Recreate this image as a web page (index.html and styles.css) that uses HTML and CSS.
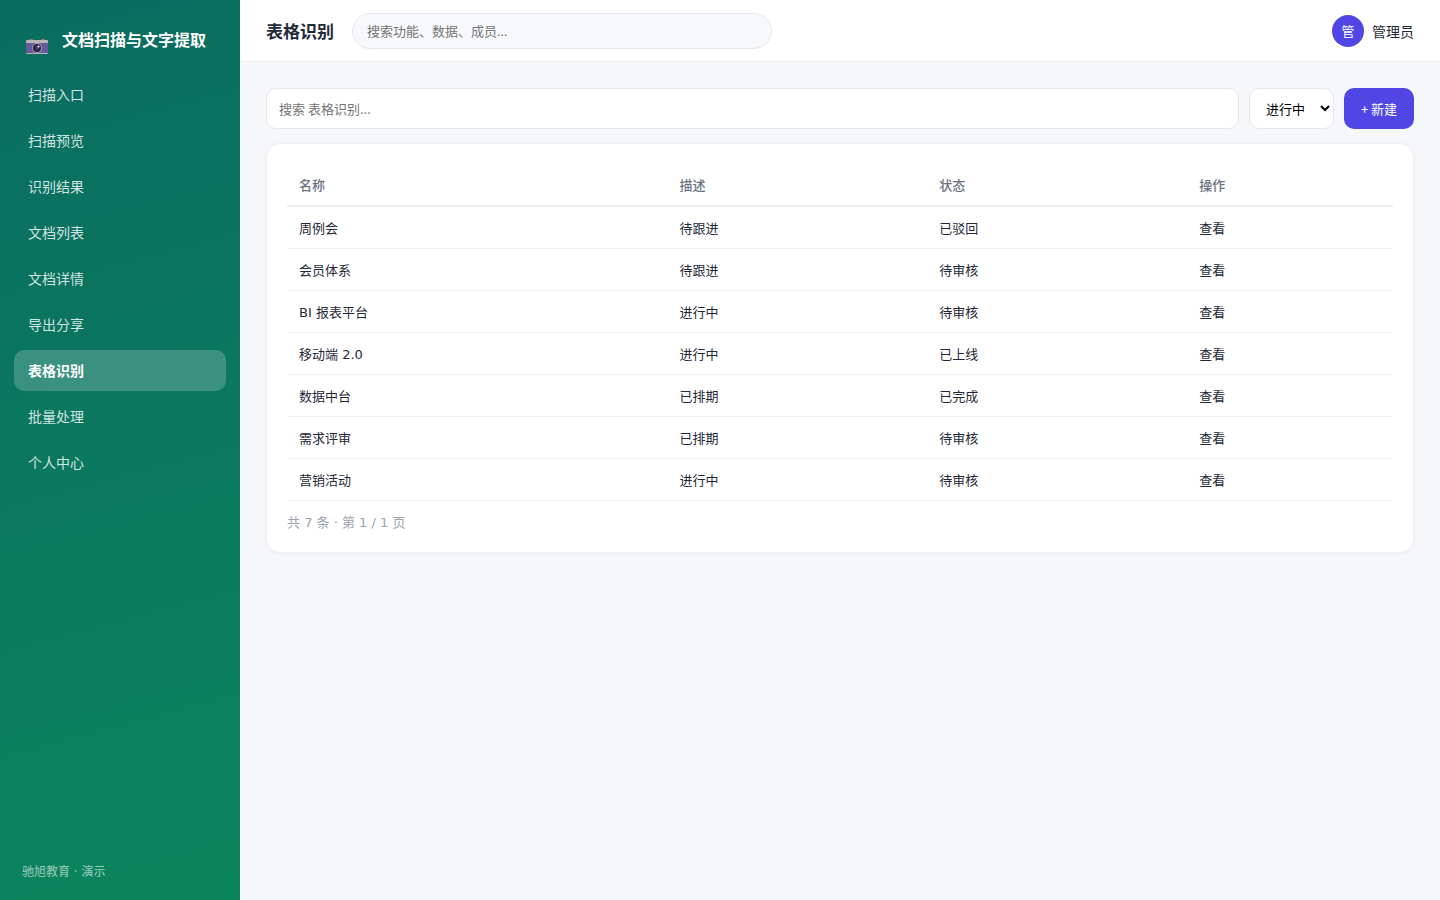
FILE: index.html
```html
<!DOCTYPE html>
<html lang="zh-CN">

<head>
	<meta charset="UTF-8">
	<meta name="viewport" content="width=device-width, initial-scale=1">
	<title>表格识别</title>
	<link rel="stylesheet" href="styles.css">
</head>

<body>
	<div class="app">
		<aside class="sidebar">
			<div class="brand">
				<svg class="brand-icon" viewBox="0 0 22 16" aria-hidden="true">
					<rect x="3" y="0" width="4" height="2" rx="1" fill="#a9715f" />
					<rect x="15" y="0" width="4" height="2" rx="1" fill="#a9715f" />
					<rect x="0" y="1" width="22" height="14" rx="1" fill="#b9b6b8" />
					<rect x="0" y="4" width="22" height="10" fill="#675a9b" />
					<circle cx="11" cy="9" r="5" fill="#a5a2ac" />
					<circle cx="11" cy="9" r="4" fill="#2c2140" />
					<circle cx="11" cy="9" r="2" fill="#3f3d75" />
					<circle cx="12.5" cy="7.5" r="1" fill="#fff" />
				</svg>
				<span>文档扫描与文字提取</span>
			</div>
			<nav class="nav">
				<a href="#">扫描入口</a>
				<a href="#">扫描预览</a>
				<a href="#">识别结果</a>
				<a href="#">文档列表</a>
				<a href="#">文档详情</a>
				<a href="#">导出分享</a>
				<a href="#" class="active" aria-current="page">表格识别</a>
				<a href="#">批量处理</a>
				<a href="#">个人中心</a>
			</nav>
			<div class="side-foot">驰旭教育 · 演示</div>
		</aside>

		<div class="main">
			<header class="topbar">
				<h1>表格识别</h1>
				<input type="search" class="global-search" placeholder="搜索功能、数据、成员…" aria-label="全局搜索">
				<div class="user">
					<span class="avatar">管</span>
					<span>管理员</span>
				</div>
			</header>

			<main class="content">
				<form class="toolbar">
					<input type="text" placeholder="搜索 表格识别..." aria-label="搜索 表格识别">
					<select aria-label="状态">
						<option>进行中</option>
						<option>已完成</option>
					</select>
					<button type="button">+ 新建</button>
				</form>

				<section class="card">
					<table>
						<thead>
							<tr>
								<th class="col-name">名称</th>
								<th class="col-mid">描述</th>
								<th class="col-mid">状态</th>
								<th>操作</th>
							</tr>
						</thead>
						<tbody>
							<tr><td>周例会</td><td>待跟进</td><td>已驳回</td><td><a href="#">查看</a></td></tr>
							<tr><td>会员体系</td><td>待跟进</td><td>待审核</td><td><a href="#">查看</a></td></tr>
							<tr><td>BI 报表平台</td><td>进行中</td><td>待审核</td><td><a href="#">查看</a></td></tr>
							<tr><td>移动端 2.0</td><td>进行中</td><td>已上线</td><td><a href="#">查看</a></td></tr>
							<tr><td>数据中台</td><td>已排期</td><td>已完成</td><td><a href="#">查看</a></td></tr>
							<tr><td>需求评审</td><td>已排期</td><td>待审核</td><td><a href="#">查看</a></td></tr>
							<tr><td>营销活动</td><td>进行中</td><td>待审核</td><td><a href="#">查看</a></td></tr>
						</tbody>
					</table>
					<div class="pager">共 7 条 · 第 1 / 1 页</div>
				</section>
			</main>
		</div>
	</div>
</body>

</html>
```
FILE: styles.css
```css
* {
	box-sizing: border-box;
}

body {
	margin: 0;
	font-family: "DejaVu Sans", "Noto Sans CJK SC", sans-serif;
	font-size: 14px;
	line-height: 20px;
	color: #1f2937;
	background: #f5f7fb;
}

a {
	color: inherit;
	text-decoration: none;
}

input,
select,
button {
	font-family: "Noto Sans CJK SC", sans-serif;
	font-size: 13px;
}

.app {
	display: flex;
	min-height: 100vh;
}

/* sidebar */
.sidebar {
	flex: 0 0 240px;
	display: flex;
	flex-direction: column;
	padding: 22px 14px 21px;
	color: #fff;
	background: linear-gradient(165deg, #0a6c61, #0b855c);
}

.brand {
	display: flex;
	align-items: center;
	gap: 14px;
	height: 36px;
	padding: 2px 12px 0;
	font-size: 16px;
	font-weight: 700;
	white-space: nowrap;
}

.brand-icon {
	width: 22px;
	height: 16px;
	margin-top: 12px;
}

.nav {
	display: flex;
	flex-direction: column;
	gap: 5px;
	margin-top: 16px;
}

.nav a {
	padding: 11px 14px 9px;
	line-height: 21px;
	border-radius: 10px;
	color: rgba(255, 255, 255, 0.82);
}

.nav a.active {
	background: rgba(255, 255, 255, 0.2);
	color: #fff;
	font-weight: 700;
}

.side-foot {
	margin-top: auto;
	padding: 0 8px;
	font-size: 12px;
	line-height: 14px;
	color: rgba(255, 255, 255, 0.6);
}

/* top bar */
.main {
	flex: 1;
	min-width: 0;
}

.topbar {
	display: flex;
	align-items: center;
	gap: 18px;
	height: 62px;
	padding: 0 26px;
	background: #fff;
	border-bottom: 1px solid #eceef3;
}

.topbar h1 {
	margin: 0;
	padding-top: 2px;
	font-size: 17px;
}

.global-search {
	width: 420px;
	height: 36px;
	padding: 0 14px;
	border: 1px solid #e5e7f0;
	border-radius: 18px;
	background: #f7f8fc;
	font-family: "Noto Sans", "Noto Sans CJK SC", sans-serif;
}

.user {
	display: flex;
	align-items: center;
	gap: 8px;
	margin-left: auto;
	font-family: "Noto Sans CJK SC", sans-serif;
}

.avatar {
	width: 32px;
	border-radius: 50%;
	background: #4f46e5;
	color: #fff;
	font-size: 13px;
	line-height: 32px;
	text-align: center;
}

/* content */
.content {
	padding: 26px;
}

.toolbar {
	display: flex;
	gap: 10px;
	height: 41px;
	margin-bottom: 14px;
}

.toolbar input {
	flex: 1;
	min-width: 0;
	padding: 0 12px;
	border: 1px solid #e5e7f0;
	border-radius: 10px;
	background: #fff;
}

.toolbar select {
	width: 85px;
	padding: 0 0 0 12px;
	border: 1px solid #e5e7f0;
	border-radius: 10px;
	background: #fff;
	color: #000;
}

.toolbar button {
	width: 70px;
	padding: 0;
	border: 0;
	border-radius: 10px;
	background: #4f46e5;
	color: #fff;
}

.card {
	padding: 20px;
	border: 1px solid #eff0f6;
	border-radius: 14px;
	background: #fff;
	box-shadow: 0 1px 4px rgba(30, 35, 90, 0.04);
}

table {
	width: 100%;
	border-collapse: separate;
	border-spacing: 0;
	font-size: 13px;
}

th,
td {
	padding: 12px 12px 10px;
	line-height: 19px;
	text-align: left;
	border-bottom: 1px solid #eeeff3;
}

th {
	border-bottom: 2px solid #eeeff4;
	color: #6b7280;
	font-weight: 500;
}

.col-name {
	width: 34.4%;
}

.col-mid {
	width: 23.5%;
}

.pager {
	margin-top: 13px;
	font-size: 13px;
	line-height: 18px;
	color: #9ca3af;
}
```
